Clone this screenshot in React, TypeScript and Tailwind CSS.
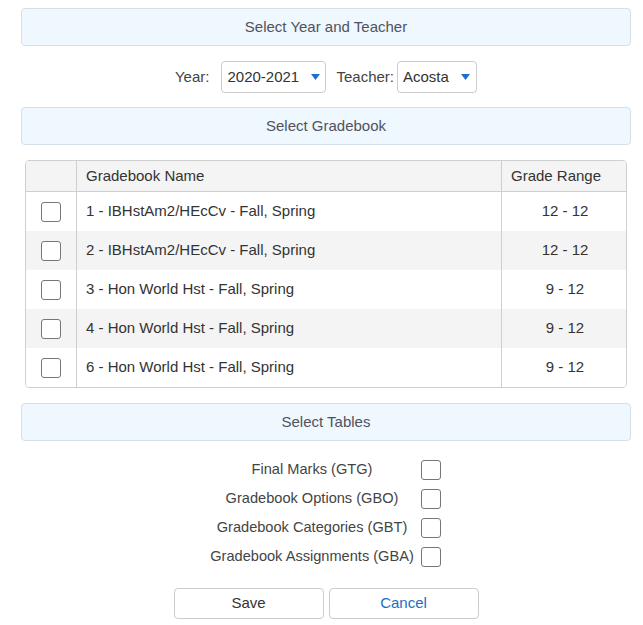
import React from "react";

const Box = () => (
  <span className="inline-block w-[20px] h-[20px] rounded-[3px] border border-[#767676] bg-white" />
);

const Header = ({ children }: { children: React.ReactNode }) => (
  <div className="h-[38px] rounded-[4px] border border-[#d3e0ea] bg-[#eff7ff] flex items-center justify-center text-[15px] text-[#50535c]">
    {children}
  </div>
);

const Caret = () => (
  <svg width="9" height="6" viewBox="0 0 9 6" className="ml-[12px]">
    <path d="M0 0 L9 0 L4.5 6 Z" fill="#1a6fd1" />
  </svg>
);

const rows = [
  ["1 - IBHstAm2/HEcCv - Fall, Spring", "12 - 12"],
  ["2 - IBHstAm2/HEcCv - Fall, Spring", "12 - 12"],
  ["3 - Hon World Hst - Fall, Spring", "9 - 12"],
  ["4 - Hon World Hst - Fall, Spring", "9 - 12"],
  ["6 - Hon World Hst - Fall, Spring", "9 - 12"],
];

const tables = [
  "Final Marks (GTG)",
  "Gradebook Options (GBO)",
  "Gradebook Categories (GBT)",
  "Gradebook Assignments (GBA)",
];

export default function App() {
  return (
    <div className="w-[643px] h-[625px] bg-white text-[#333] text-[15px] font-['Liberation_Sans',Arial,sans-serif] pt-[8px] pl-[21px] pr-[12px]">
      <Header>Select Year and Teacher</Header>
      <div className="flex items-center justify-center mt-[15px] h-[32px]">
        <span className="text-[#444] mr-[12px]">Year:</span>
        <div className="h-[32px] w-[105px] rounded-[4px] border border-[#ccc] flex items-center pl-[5px]">
          <span>2020-2021</span>
          <Caret />
        </div>
        <span className="text-[#444] ml-[10px] mr-[3px]">Teacher:</span>
        <div className="h-[32px] w-[80px] rounded-[4px] border border-[#ccc] flex items-center pl-[5px]">
          <span>Acosta</span>
          <Caret />
        </div>
      </div>
      <div className="mt-[14px]">
        <Header>Select Gradebook</Header>
      </div>
      <div className="mt-[15px] ml-[4px] mr-[4px] border border-[#cfcfcf] rounded-[4px] overflow-hidden">
        <div className="flex h-[31px] bg-[#f4f4f4] border-b border-[#cfcfcf] text-[#333]">
          <div className="w-[51px] border-r border-[#cfcfcf]" />
          <div className="flex-1 flex items-center pl-[9px] border-r border-[#cfcfcf]">Gradebook Name</div>
          <div className="w-[124px] flex items-center pl-[9px]">Grade Range</div>
        </div>
        {rows.map(([name, range], i) => (
          <div key={i} className={`flex h-[39px] ${i % 2 === 1 ? "bg-[#f4f4f4]" : "bg-white"}`}>
            <div className="w-[51px] border-r border-[#cfcfcf] flex items-center pl-[15px]">
              <Box />
            </div>
            <div className="flex-1 flex items-center pl-[9px] border-r border-[#cfcfcf]">{name}</div>
            <div className="w-[124px] flex items-center justify-center pl-[2px]">{range}</div>
          </div>
        ))}
      </div>
      <div className="mt-[15px]">
        <Header>Select Tables</Header>
      </div>
      <div className="mt-[19px] flex flex-col items-center gap-[9px] ml-[-4px]">
        {tables.map((t) => (
          <div key={t} className="flex items-center h-[20px]">
            <div className="w-[214px] pr-[4px] text-center text-[14.6px] text-[#444]">{t}</div>
            <Box />
          </div>
        ))}
      </div>
      <div className="mt-[21px] flex justify-center gap-[5px]">
        <button className="w-[150px] h-[31px] rounded-[4px] border border-[#ccc] bg-white text-[#333] text-[15px]">Save</button>
        <button className="w-[150px] h-[31px] rounded-[4px] border border-[#ccc] bg-white text-[#1a6fc4] text-[15px]">Cancel</button>
      </div>
    </div>
  );
}
